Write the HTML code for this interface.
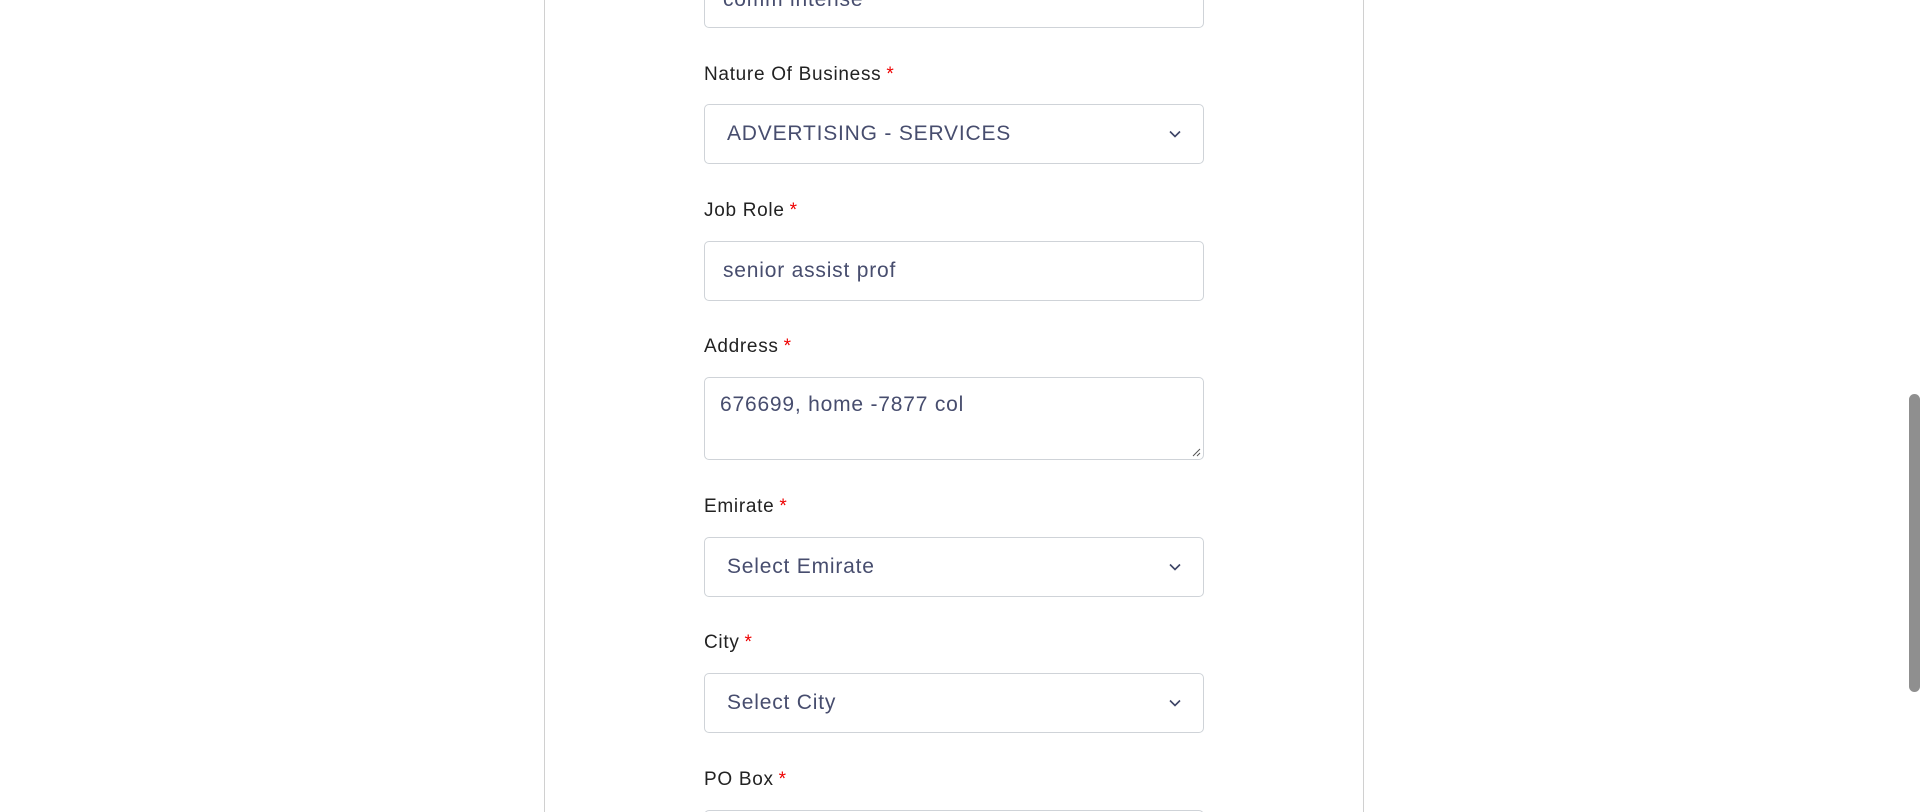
<!DOCTYPE html>
<html><head><meta charset="utf-8"><style>
html,body{margin:0;padding:0;background:#fff;width:1920px;height:812px;overflow:hidden;font-family:"Liberation Sans",sans-serif}
#wrap{position:relative;width:1920px;height:812px;overflow:hidden}
.panel{position:absolute;left:544px;top:-10px;width:818px;height:840px;border-left:1px solid #d0d0d0;border-right:1px solid #d0d0d0}
.lbl{position:absolute;left:704px;font-size:19px;letter-spacing:0.7px;color:#222;line-height:22px;top:1px}
.lbl b{color:#e00;font-weight:normal;margin-left:5px}
.box{position:absolute;left:704px;width:500px;border:1px solid #cfd3d8;border-radius:5px;background:#fff;box-sizing:border-box}
.val{position:absolute;font-size:21px;letter-spacing:0.8px;color:#474d6e;white-space:nowrap}
.chev{position:absolute;right:22px;top:25px}
.sb{position:absolute;left:1909px;top:394px;width:11px;height:298px;background:#8f8f8f;border-radius:6px}
</style></head><body><div id="wrap">
<div class="panel"></div>
<div class="box" style="top:-30px;height:58px"><span class="val" style="left:18px;top:17px">comm intense</span></div>
<div class="lbl" style="top:64px">Nature Of Business<b>*</b></div>
<div class="box" style="top:104px;height:60px"><span class="val" style="left:22px;top:17px">ADVERTISING - SERVICES</span>
<svg class="chev" width="12" height="8" viewBox="0 0 12 8"><path d="M1 1.5L6 6.5L11 1.5" fill="none" stroke="#3d4466" stroke-width="1.6"/></svg></div>
<div class="lbl" style="top:200px">Job Role<b>*</b></div>
<div class="box" style="top:241px;height:60px"><span class="val" style="left:18px;top:17px">senior assist prof</span></div>
<div class="lbl" style="top:336px">Address<b>*</b></div>
<div class="box" style="top:377px;height:83px"><span class="val" style="left:15px;top:15px">676699, home -7877 col</span>
<svg style="position:absolute;right:2px;bottom:2px" width="10" height="10"><path d="M9 2L2 9M9 6L6 9" stroke="#555" stroke-width="1"/></svg></div>
<div class="lbl" style="top:496px">Emirate<b>*</b></div>
<div class="box" style="top:537px;height:60px"><span class="val" style="left:22px;top:17px">Select Emirate</span>
<svg class="chev" width="12" height="8" viewBox="0 0 12 8"><path d="M1 1.5L6 6.5L11 1.5" fill="none" stroke="#3d4466" stroke-width="1.6"/></svg></div>
<div class="lbl" style="top:632px">City<b>*</b></div>
<div class="box" style="top:673px;height:60px"><span class="val" style="left:22px;top:17px">Select City</span>
<svg class="chev" width="12" height="8" viewBox="0 0 12 8"><path d="M1 1.5L6 6.5L11 1.5" fill="none" stroke="#3d4466" stroke-width="1.6"/></svg></div>
<div class="lbl" style="top:769px">PO Box<b>*</b></div>
<div class="box" style="top:810px;height:60px"></div>
<div class="sb"></div>
</div></body></html>
